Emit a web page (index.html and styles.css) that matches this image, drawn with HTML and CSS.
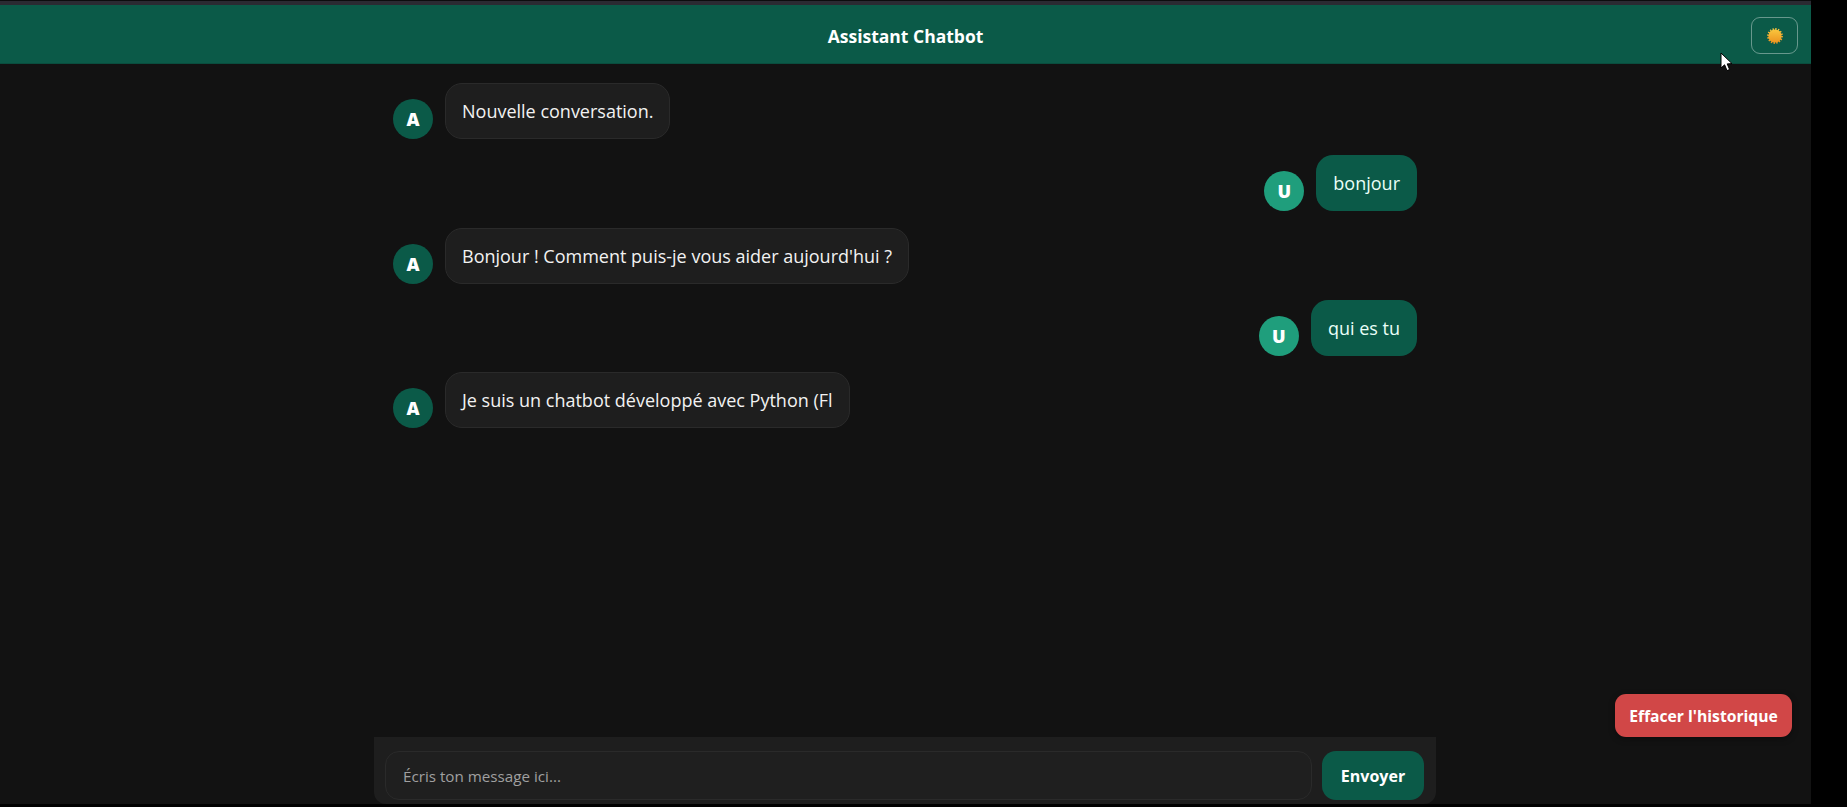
FILE: index.html
```html
<!DOCTYPE html>
<html lang="fr">
<head>
<meta charset="utf-8">
<title>Assistant Chatbot</title>
<link rel="stylesheet" href="styles.css">
</head>
<body>
<div class="app">
  <div class="topstrip"></div>
  <header class="header">
    <h1 class="title">Assistant Chatbot</h1>
    <button class="theme" type="button" aria-label="Thème">
      <svg class="sun" width="18" height="18" viewBox="0 0 18 18">
        <defs>
          <linearGradient id="sung" x1="0" y1="0" x2="0" y2="1">
            <stop offset="0" stop-color="#f9c63e"/>
            <stop offset="1" stop-color="#ec9420"/>
          </linearGradient>
        </defs>
        <circle cx="9" cy="9" r="6.6" fill="url(#sung)"/>
        <circle cx="9" cy="9" r="7" fill="none" stroke="url(#sung)" stroke-width="1.8" stroke-dasharray="1.4 1.35"/>
      </svg>
    </button>
  </header>
  <main class="main">
    <div class="chat">
      <div class="messages">
        <div class="msg bot"><span class="avatar">A</span><div class="bubble">Nouvelle conversation.</div></div>
        <div class="msg user"><span class="avatar">U</span><div class="bubble">bonjour</div></div>
        <div class="msg bot"><span class="avatar">A</span><div class="bubble">Bonjour ! Comment puis-je vous aider aujourd'hui ?</div></div>
        <div class="msg user"><span class="avatar">U</span><div class="bubble">qui es tu</div></div>
        <div class="msg bot"><span class="avatar">A</span><div class="bubble">Je suis un chatbot développé avec Python (Fl</div></div>
      </div>
      <form class="composer">
        <input class="field" type="text" placeholder="Écris ton message ici...">
        <button class="send" type="button">Envoyer</button>
      </form>
    </div>
    <button class="clear" type="button">Effacer l'historique</button>
  </main>
</div>
<svg class="cursor" width="14" height="21" viewBox="0 0 14 21">
  <path d="M1 1 L1 16 L4.6 12.8 L7 18.6 L9.6 17.5 L7.2 11.9 L12 11.6 Z" fill="#fff" stroke="#000" stroke-width="1"/>
</svg>
</body>
</html>
```

FILE: styles.css
```css
* { box-sizing: border-box; }
html, body { margin: 0; height: 100%; background: #000; overflow: hidden; }
body { font-family: "Open Sans", "Noto Sans", sans-serif; color: #f2f2f2; }
.app { width: 1811px; height: 804px; display: flex; flex-direction: column; background: #121212; }
.topstrip { height: 5px; flex: none; background: #2b2a32; border-top: 1px solid #0d0d0f; }
.header { height: 59px; flex: none; display: flex; align-items: center; justify-content: center; position: relative; padding-top: 3px; background: #0b5a48; box-shadow: inset 0 -1px 0 #0a4d3e; }
.title { margin: 0; font-size: 17.5px; font-weight: 700; color: #fff; }
.theme { position: absolute; right: 13px; top: 12px; width: 47px; height: 37px; padding: 0; display: flex; align-items: center; justify-content: center; background: transparent; border: 1.5px solid rgba(255,255,255,.38); border-radius: 9px; }
.main { flex: 1; min-height: 0; position: relative; display: flex; justify-content: center; padding-right: 1px; }
.chat { width: 1062px; display: flex; flex-direction: column; }
.messages { flex: 1; min-height: 0; display: flex; flex-direction: column; gap: 16.3px; padding: 19px 19px 0; }
.msg { display: flex; align-items: flex-end; gap: 12px; }
.msg.user { justify-content: flex-end; }
.msg.user .avatar { background: #1f9e7c; }
.avatar { width: 40px; height: 40px; flex: none; border-radius: 50%; display: flex; align-items: center; justify-content: center; background: #0b5a48; color: #fff; font-weight: 800; font-size: 18px; }
.bubble { height: 56px; padding: 0 17px; display: flex; align-items: center; font-size: 18px; white-space: nowrap; border-radius: 17px; }
.bot .bubble { background: #1e1e1e; border: 1px solid #2a2a2a; color: #f2f2f2; padding: 0 16px; }
.user .bubble { background: #0b5a48; color: #eafff8; }
.composer { height: 67px; flex: none; display: flex; gap: 10px; padding: 14px 12px 4px 11px; background: #1e1e1e; border-radius: 0 0 12px 12px; }
.field { flex: 1; min-width: 0; height: 49px; padding: 0 17px; background: #1f1f1f; border: 1px solid #2a2a2a; border-radius: 14px; color: #eee; font: 15.2px "Open Sans", sans-serif; outline: none; }
.field::placeholder { color: #a0a0a0; opacity: 1; }
.send { width: 102px; height: 49px; flex: none; background: #0b5a48; color: #fff; border: 0; border-radius: 14px; font: 700 16px "Open Sans", sans-serif; }
.clear { position: absolute; right: 19px; top: 630px; width: 177px; height: 43px; padding: 0; background: #d14747; color: #fff; border: 0; border-radius: 11px; font: 700 15.7px "Open Sans", sans-serif; box-shadow: 0 2px 6px rgba(0,0,0,.35); }
.cursor { position: absolute; left: 1720px; top: 52px; }
```
